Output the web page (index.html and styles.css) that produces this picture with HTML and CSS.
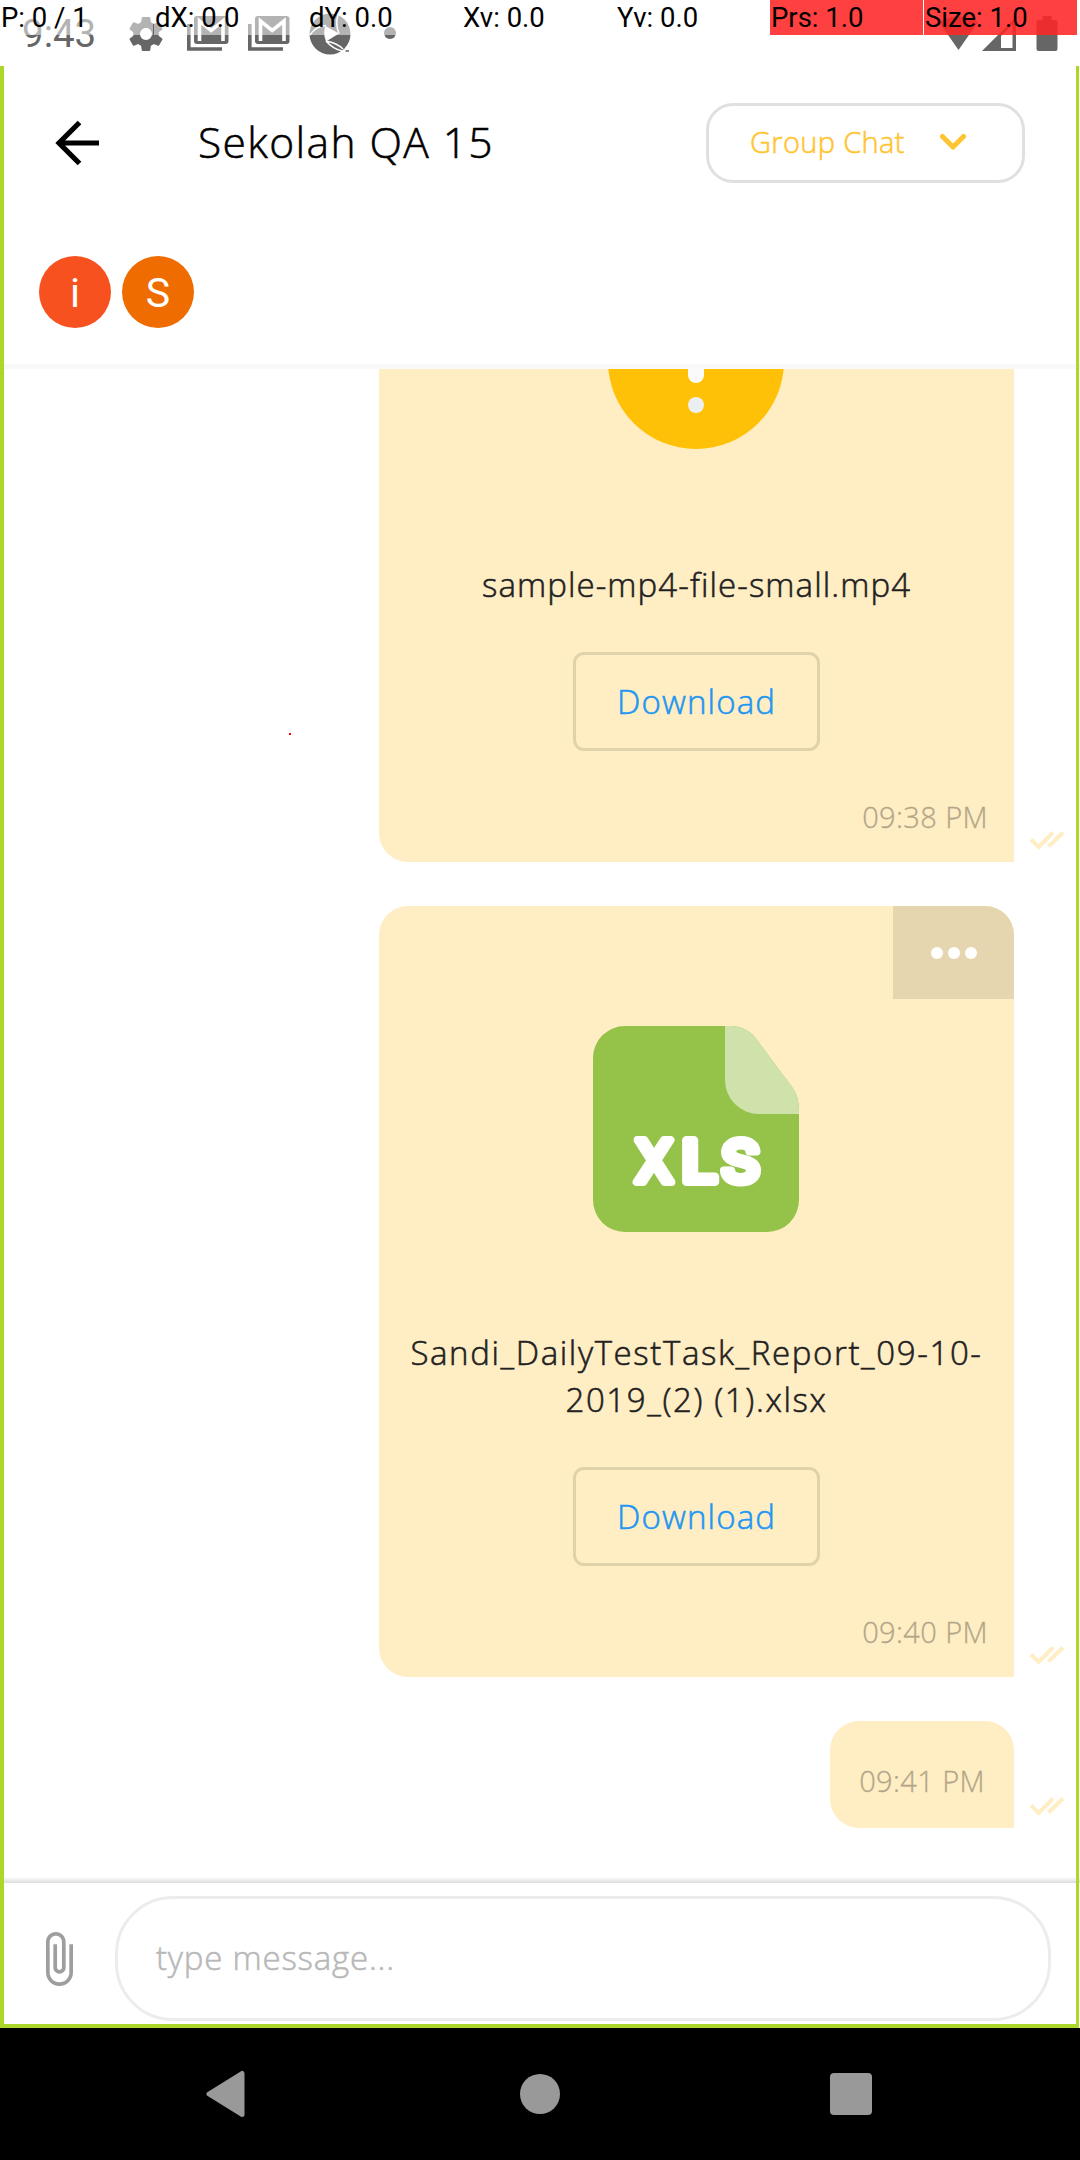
FILE: index.html
```
<!DOCTYPE html>
<html lang="en">
<head>
<meta charset="utf-8">
<title>Sekolah QA 15</title>
<link rel="stylesheet" href="styles.css">
</head>
<body>
<svg class="defs" width="0" height="0" aria-hidden="true">
  <symbol id="read" viewBox="0 0 36 20">
    <path d="M2 9.500L9.700 17L24 2.500M19.500 16.500L34 2.500" fill="none" stroke="#ffedc4" stroke-width="4"/>
  </symbol>
  <symbol id="mail" viewBox="0 0 42 36">
    <path d="M1.800 8V33H35" fill="none" stroke="#666" stroke-width="3.600"/>
    <rect x="7" y="0" width="34.500" height="28" rx="3" fill="#666"/>
    <path d="M12.500 25V5L24.200 14.500L36 5V25" fill="none" stroke="#fff" stroke-width="3.600"/>
  </symbol>
</svg>
<div class="screen">
  <header class="status">
    <span class="clock">9:43</span>
    <svg class="gear" viewBox="2 2 20 20" width="34" height="36"><path fill="#666" d="M19.430 12.980c.04-.32.07-.64.07-.98s-.03-.66-.07-.98l2.110-1.650c.19-.15.24-.42.120-.64l-2-3.460c-.12-.22-.39-.3-.61-.22l-2.490 1c-.52-.4-1.080-.73-1.690-.98l-.38-2.650C14.460 2.180 14.250 2 14 2h-4c-.25 0-.46.180-.49.420l-.38 2.650c-.61.250-1.170.590-1.690.980l-2.490-1c-.23-.09-.49 0-.61.220l-2 3.460c-.13.220-.07.490.120.640l2.110 1.650c-.04.320-.07.650-.07.980s.03.660.070.980l-2.110 1.650c-.19.150-.24.420-.12.640l2 3.460c.12.220.39.300.61.220l2.490-1c.52.400 1.080.730 1.690.980l.38 2.650c.03.240.24.420.49.420h4c.25 0 .46-.18.490-.42l.38-2.650c.61-.25 1.170-.59 1.690-.98l2.490 1c.23.090.49 0 .61-.22l2-3.460c.12-.22.070-.49-.12-.64l-2.110-1.650zM12 15.500c-1.930 0-3.500-1.570-3.500-3.500s1.570-3.500 3.500-3.500 3.500 1.570 3.500 3.500-1.570 3.500-3.500 3.500z"/></svg>
    <svg class="mail" width="42" height="36"><use href="#mail"/></svg>
    <svg class="mail second" width="42" height="36"><use href="#mail"/></svg>
    <svg class="shutter" viewBox="0 0 42 42" width="42" height="42">
      <circle cx="21" cy="21" r="20.500" fill="#666"/>
      <path d="M16.500 13L30 20.500L17 28.500Q13.500 20 16.500 13Z" fill="#fff"/>
      <path d="M1 22Q7 13 17 12.500M17 28Q24 36 33 38M30 20.500Q26 11 29 2M17 28Q28 30 34 36" fill="none" stroke="#fff" stroke-width="1.600"/>
      <path d="M36.500 38h3.500" stroke="#666" stroke-width="1.500"/>
    </svg>
    <i class="dot"></i>
    <svg class="radio" viewBox="0 0 124 36" width="124" height="36">
      <path d="M0 6Q20-5 39 6L19.500 34Z" fill="#666"/>
      <path d="M43 35L77 1V35Z" fill="#666"/>
      <path d="M62 20L73.500 8.500V32H62Z" fill="#fff"/>
      <path d="M103.500 0h9v4h4a2 2 0 0 1 2 2V33a2 2 0 0 1-2 2h-17a2 2 0 0 1-2-2V6a2 2 0 0 1 2-2h4Z" fill="#666"/>
    </svg>
    <div class="pointer">
      <span>P: 0 / 1</span><span>dX: 0.0</span><span>dY: 0.0</span><span>Xv: 0.0</span><span>Yv: 0.0</span><span class="hot">Prs: 1.0</span><span class="hot">Size: 1.0</span>
    </div>
  </header>

  <main class="app">
    <div class="toolbar">
      <svg class="back" viewBox="0 0 46 46" width="46" height="46"><path d="M24.500 2.500L4 23L24.500 43.500M4 23H44" fill="none" stroke="#000" stroke-width="5.200"/></svg>
      <h1>Sekolah QA 15</h1>
      <button class="group">Group Chat
        <svg viewBox="0 0 26 18" width="26" height="18"><path d="M2.500 3.500L13 14L23.500 3.500" fill="none" stroke="#ffc431" stroke-width="5" stroke-linecap="round" stroke-linejoin="round"/></svg>
      </button>
    </div>
    <div class="members"><span class="avatar">i</span><span class="avatar amber">S</span></div>

    <section class="thread">
      <div class="row">
        <article class="bubble video">
          <svg class="warn" viewBox="0 0 176 80" width="176" height="80">
            <circle cx="88" cy="-8" r="88" fill="#ffc107"/>
            <rect x="80" y="-60" width="16" height="74" rx="8" fill="#fafafa"/>
            <circle cx="88" cy="36" r="8" fill="#eceff1"/>
          </svg>
          <p class="name">sample-mp4-file-small.mp4</p>
          <button class="download">Download</button>
          <time>09:38 PM</time>
        </article>
        <svg class="tick" width="36" height="20"><use href="#read"/></svg>
      </div>
      <div class="row">
        <article class="bubble sheet">
          <div class="more"><i></i><i></i><i></i></div>
          <svg class="file" viewBox="0 0 206 206" width="206" height="206">
            <path d="M32 0H138Q154 0 164 14L199 61Q206 70 206 85V174A32 32 0 0 1 174 206H32A32 32 0 0 1 0 174V32A32 32 0 0 1 32 0Z" fill="#95c249"/>
            <path d="M132 0H138Q154 0 164 14L199 61Q206 70 206 85V88H166A34 34 0 0 1 132 54Z" fill="#cfe2ab"/>
            <g class="ext"><text x="42" y="155.500" textLength="38" lengthAdjust="spacingAndGlyphs">X</text><text x="88.500" y="155.500" textLength="36" lengthAdjust="spacingAndGlyphs">L</text><text x="128" y="155.500" textLength="39" lengthAdjust="spacingAndGlyphs">S</text></g>
          </svg>
          <p class="name wide">Sandi_DailyTestTask_Report_09-10-<br>2019_(2) (1).xlsx</p>
          <button class="download">Download</button>
          <time>09:40 PM</time>
        </article>
        <svg class="tick" width="36" height="20"><use href="#read"/></svg>
      </div>
      <div class="row">
        <article class="bubble short"><time>09:41 PM</time></article>
        <svg class="tick" width="36" height="20"><use href="#read"/></svg>
      </div>
      <i class="touch"></i>
    </section>

    <footer class="composer">
      <svg class="clip" viewBox="7 1 11 22" width="27" height="54"><path fill="#9e9e9e" d="M16.500 6v11.500c0 2.210-1.790 4-4 4s-4-1.790-4-4V5c0-1.380 1.120-2.500 2.500-2.500s2.500 1.120 2.500 2.500v10.500c0 .55-.45 1-1 1s-1-.45-1-1V6H10v9.500c0 1.380 1.120 2.500 2.500 2.500s2.500-1.120 2.500-2.500V5c0-2.210-1.790-4-4-4S7 2.790 7 5v12.500c0 3.040 2.460 5.500 5.500 5.500s5.500-2.460 5.500-5.500V6h-1.500z"/></svg>
      <div class="field">type message...</div>
    </footer>
    <div class="frame"></div>
  </main>

  <nav class="keys">
    <svg viewBox="0 0 40 48" width="40" height="48"><path d="M3 24L36 3.500V44.500Z" fill="#999" stroke="#999" stroke-width="5" stroke-linejoin="round"/></svg>
    <i class="home"></i>
    <i class="recent"></i>
  </nav>
</div>
</body>
</html>
```
FILE: styles.css
```
* { box-sizing: border-box; }
body { margin: 0; background: #fff; }
h1, p { margin: 0; font-weight: 300; }
button { padding: 0; background: none; font: inherit; }
.defs { position: absolute; }

.screen {
  display: flex;
  flex-direction: column;
  width: 1080px;
  height: 2160px;
  overflow: hidden;
  background: #fff;
  font-family: "Open Sans", "Noto Sans", sans-serif;
  font-weight: 300;
}
h1, .group, .name, .download, .field { -webkit-text-stroke: .55px currentColor; }

/* status bar */
.status {
  position: relative;
  display: flex;
  align-items: flex-start;
  height: 66px;
  padding: 16px 0 0 22px;
  font-family: Roboto, sans-serif;
}
.clock { width: 107px; color: #666; font-size: 38.500px; font-weight: 400; line-height: 36px; }
.mail { margin-left: 24px; }
.mail.second { margin-left: 19px; }
.shutter { margin: -3px 0 0 19px; }
.dot { width: 12px; height: 12px; margin: 11px 0 0 33px; border-radius: 50%; background: #666; }
.radio { margin-left: 543px; }
.pointer {
  position: absolute;
  top: 0;
  left: 0;
  display: grid;
  grid-template-columns: repeat(7, 153px);
  column-gap: 1px;
  width: 1080px;
  height: 35px;
  color: #000;
  font-size: 27.500px;
  font-weight: 400;
  line-height: 35px;
}
.pointer span { padding-left: 1px; background: rgba(255, 255, 255, .5); white-space: nowrap; }
.pointer .hot { background: linear-gradient(rgba(255, 0, 0, .75), rgba(255, 0, 0, .75)), rgba(255, 255, 255, .5); }

/* app surface */
.app { position: relative; display: flex; flex-direction: column; height: 1962px; }
.frame {
  position: absolute;
  inset: 0 1px 0 0;
  border: solid #aad72a;
  border-width: 0 3px 4px 4px;
  pointer-events: none;
}
.toolbar { display: flex; align-items: center; height: 155px; padding: 0 55px 2px; }
.back { flex: none; }
h1 { flex: 1; margin: -2px 0 0 97px; font-size: 42.500px; line-height: 60px; letter-spacing: 1.400px; white-space: nowrap; }
.group {
  display: flex;
  align-items: center;
  gap: 35px;
  width: 319px;
  height: 80px;
  padding: 0 0 2px 41px;
  border: 3px solid #e0e0e0;
  border-radius: 27px;
  color: #ffc431;
  font-size: 29px;
  letter-spacing: .35px;
  white-space: nowrap;
}
.members { display: flex; gap: 11px; height: 148px; padding: 35px 39px; border-bottom: 5px solid #f9f9f9; }
.avatar {
  width: 72px;
  height: 72px;
  border-radius: 50%;
  background: #f6511f;
  color: #fff;
  font: 400 41px/74px Roboto, sans-serif;
  text-align: center;
}
.amber { background: #ef6c00; }

/* messages */
.thread {
  position: relative;
  display: flex;
  flex-direction: column;
  gap: 44px;
  height: 1514px;
}
.row { display: flex; justify-content: flex-end; align-items: flex-end; gap: 15px; padding-right: 15px; }
.tick { margin-bottom: 12px; }
.bubble {
  position: relative;
  display: flex;
  flex-direction: column;
  align-items: center;
  width: 635px;
  border-radius: 29px 29px 0 29px;
  background: #ffedc4;
}
.warn, .file { margin-right: 1px; }
.video { height: 493px; border-top-left-radius: 0; border-top-right-radius: 0; }
.sheet { height: 771px; padding-top: 120px; }
.short { width: 184px; height: 107px; padding-top: 39px; }
.name { color: #212121; font-size: 33px; line-height: 47px; letter-spacing: 1.080px; text-align: center; white-space: nowrap; }
.video .name { margin-top: 112px; }
.wide { margin-top: 97px; letter-spacing: 1.620px; }
.download {
  width: 247px;
  height: 99px;
  margin-top: 44px;
  border: 3px solid #e0d2ab;
  border-radius: 11px;
  color: #2196f3;
  font-size: 33px;
  letter-spacing: 1.150px;
}
time { margin: 45px 26px 0 0; align-self: flex-end; color: #b3a688; font-size: 29px; font-weight: 300; line-height: 42px; letter-spacing: .4px; white-space: nowrap; -webkit-text-stroke: .3px currentColor; }
.short time { margin: 0 29px 0 0; }
.more {
  position: absolute;
  top: 0;
  right: 0;
  display: flex;
  align-items: center;
  justify-content: center;
  gap: 5px;
  width: 121px;
  height: 93px;
  border-top-right-radius: 29px;
  background: #e5d6af;
}
.more i { width: 12px; height: 12px; border-radius: 50%; background: #fff; }
.ext { fill: #fff; stroke: #fff; stroke-width: 8px; stroke-linejoin: round; font: 500 57px Inter, sans-serif; }
.touch { position: absolute; left: 289px; top: 364px; width: 2px; height: 2px; background: #f00; }

/* composer */
.composer {
  position: relative;
  display: flex;
  align-items: center;
  height: 145px;
  padding: 6px 29px 0 46px;
  background: #fff;
}
.composer::before {
  content: "";
  position: absolute;
  left: 0;
  right: 0;
  top: -6px;
  height: 6px;
  background: linear-gradient(rgba(0, 0, 0, 0), rgba(0, 0, 0, .14));
}
.clip { flex: none; margin-right: 42px; }
.field {
  flex: 1;
  height: 125px;
  padding-left: 38px;
  border: 3px solid #ececec;
  border-radius: 58px;
  color: #b8b8b8;
  font-size: 33px;
  line-height: 118px;
  letter-spacing: .8px;
}

/* navigation keys */
.keys { display: flex; align-items: center; height: 132px; padding-left: 206px; background: #000; }
.home { width: 40px; height: 40px; margin-left: 274px; border-radius: 50%; background: #999; }
.recent { width: 42px; height: 42px; margin-left: 270px; border-radius: 4px; background: #999; }
```
